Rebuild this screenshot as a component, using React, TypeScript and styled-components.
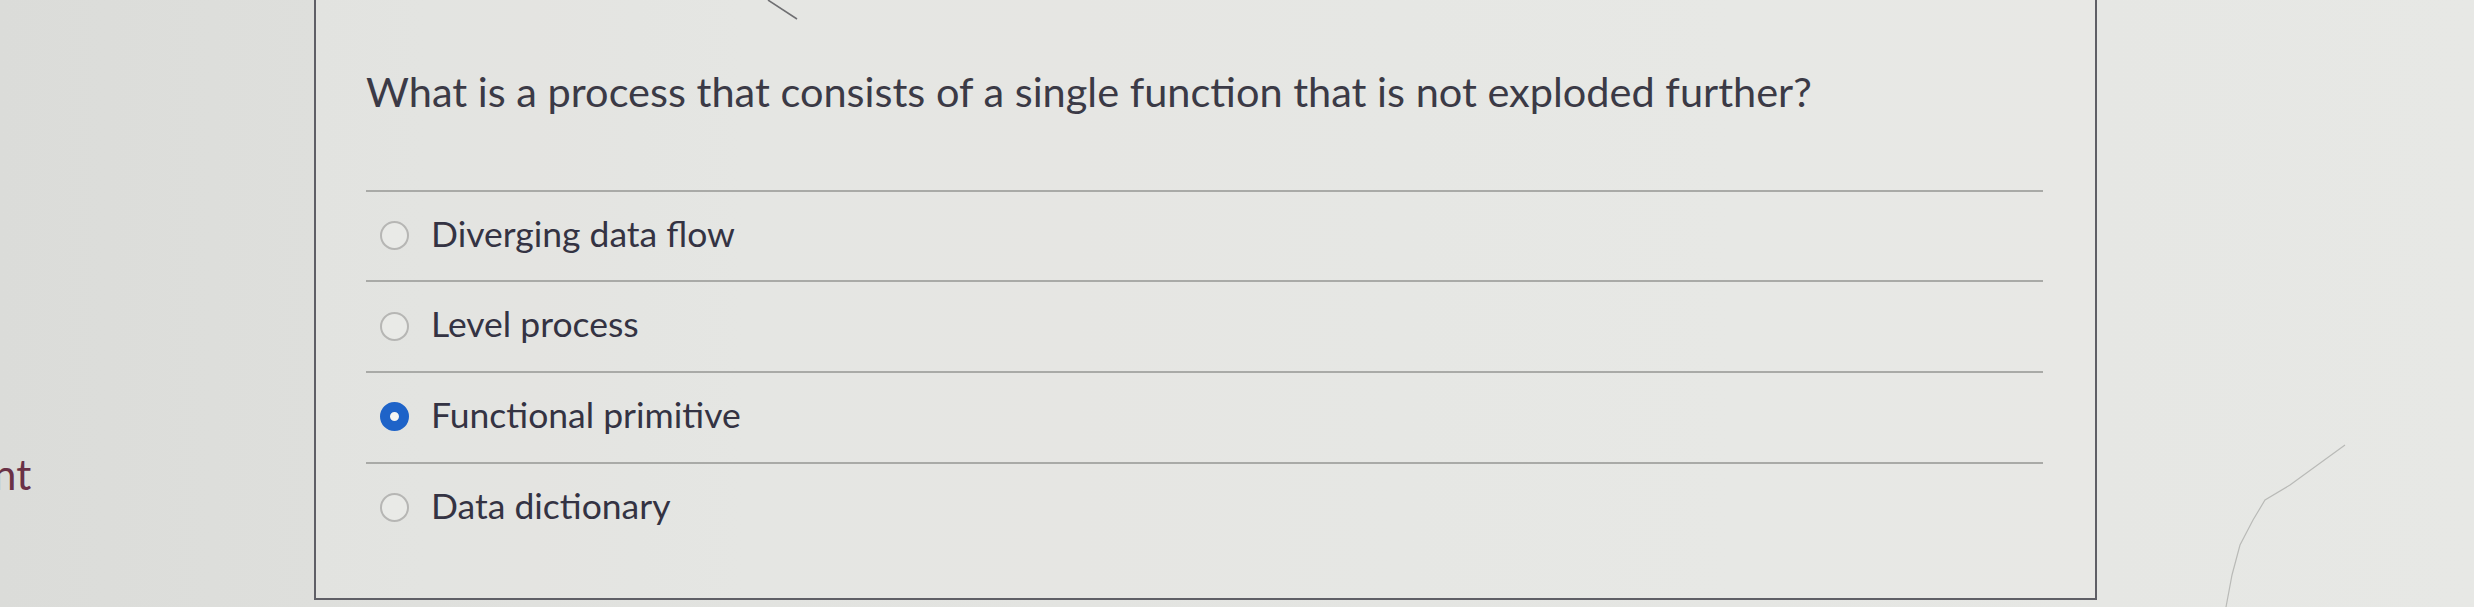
import React from "react";
import styled, { createGlobalStyle } from "styled-components";

const GlobalStyle = createGlobalStyle`
  html, body {
    margin: 0;
    padding: 0;
  }
  body {
    width: 2474px;
    height: 607px;
    overflow: hidden;
    background: linear-gradient(90deg, #dbdcd9 0%, #e2e3e0 30%, #e5e6e3 70%, #e7e8e5 100%);
    font-family: Lato, "Open Sans", "Liberation Sans", sans-serif;
  }
`;

const Page = styled.div`
  position: relative;
  display: flex;
  flex-direction: row;
  align-items: flex-start;
  height: 607px;
  overflow: hidden;
`;

const Sidebar = styled.aside`
  width: 314px;
  flex: none;
  overflow: hidden;
  padding-top: 449px;
`;

const SideText = styled.span`
  display: block;
  margin-left: -7px;
  font-size: 42px;
  line-height: 1.2;
  color: #6a3146;
`;

const Card = styled.section`
  flex: none;
  box-sizing: border-box;
  width: 1783px;
  height: 600px;
  border: 2px solid #5f5f66;
  border-top: none;
  padding: 67px 52px 0 50px;
  background: rgba(234, 235, 232, 0.35);
`;

const Question = styled.h2`
  margin: 0;
  font-weight: 400;
  font-size: 41.5px;
  line-height: 1.2;
  color: #3b3a46;
`;

const Answers = styled.ul`
  list-style: none;
  margin: 73px 0 0 0;
  padding: 0;
`;

const Answer = styled.li`
  display: flex;
  align-items: center;
  gap: 22px;
  padding: 21px 0 25px 14px;
  border-top: 2px solid #a9aaa7;
`;

const Radio = styled.span<{ $checked?: boolean }>`
  flex: none;
  box-sizing: border-box;
  width: 29px;
  height: 29px;
  margin-top: 3px;
  border-radius: 50%;
  border: ${(p) => (p.$checked ? "10px solid #1e63c8" : "2px solid #b6b6b4")};
  background: ${(p) => (p.$checked ? "#f4f5f3" : "#e9eae7")};
`;

const Label = styled.span`
  font-size: 35.5px;
  line-height: 1.2;
  color: #343343;
`;

const Scratches = styled.svg`
  position: absolute;
  inset: 0;
  pointer-events: none;
`;

const options = [
  { text: "Diverging data flow", checked: false },
  { text: "Level process", checked: false },
  { text: "Functional primitive", checked: true },
  { text: "Data dictionary", checked: false },
];

export default function App() {
  return (
    <>
      <GlobalStyle />
      <Page>
        <Sidebar>
          <SideText>nt</SideText>
        </Sidebar>
        <Card>
          <Question>
            What is a process that consists of a single function that is not exploded further?
          </Question>
          <Answers>
            {options.map((o) => (
              <Answer key={o.text}>
                <Radio $checked={o.checked} />
                <Label>{o.text}</Label>
              </Answer>
            ))}
          </Answers>
        </Card>
        <Scratches width="2474" height="607" viewBox="0 0 2474 607">
          <path d="M768 0 L797 19" stroke="#6f6f72" strokeWidth="1.5" fill="none" />
          <path
            d="M2345 445 L2290 485 L2265 500 L2253 520 L2240 545 L2232 575 L2226 607"
            stroke="#b9bab7"
            strokeWidth="1.2"
            fill="none"
          />
        </Scratches>
      </Page>
    </>
  );
}
